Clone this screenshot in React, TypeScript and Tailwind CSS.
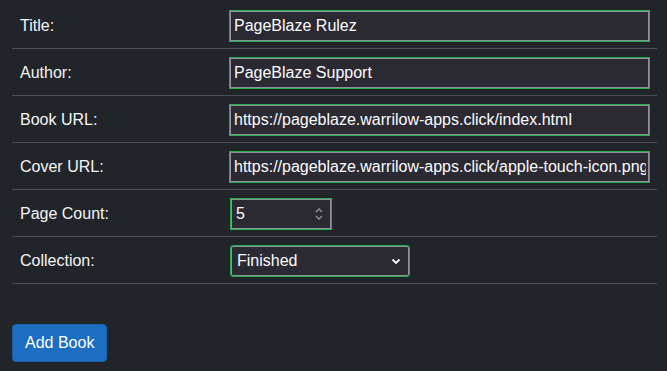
import React from 'react';

const textFields = [
  { label: 'Title:', value: 'PageBlaze Rulez' },
  { label: 'Author:', value: 'PageBlaze Support' },
  { label: 'Book URL:', value: 'https://pageblaze.warrilow-apps.click/index.html' },
  { label: 'Cover URL:', value: 'https://pageblaze.warrilow-apps.click/apple-touch-icon.png' },
];

const control =
  'h-[30px] bg-[#2b2a33] border border-[#8f8f9d] outline outline-1 outline-[#26b050] text-[16px] text-[#fbfbfe]';

function Row({ label, children }: { label: string; children: React.ReactNode }) {
  return (
    <div className="flex items-start h-[47px] pt-[9px] border-b border-[#4b4f54]">
      <div className="w-[211px] h-[30px] px-2 flex items-center text-[16px] text-[#f4f4f4]">{label}</div>
      <div className="px-2 flex items-center">{children}</div>
    </div>
  );
}

export default function App() {
  return (
    <div className="w-[667px] h-[371px] bg-[#212529] font-['Liberation_Sans',Arial,sans-serif] overflow-hidden">
      <div className="ml-3 w-[645px] pt-[2px]">
        {textFields.map((f) => (
          <Row key={f.label} label={f.label}>
            <input
              readOnly
              value={f.value}
              className={`${control} w-[419px] pl-[3px] pr-[2px]`}
            />
          </Row>
        ))}

        <Row label="Page Count:">
          <div className={`${control} w-[100px] flex items-center justify-between pl-[4px] pr-[6px]`}>
            <span>5</span>
            <svg width="10" height="14" viewBox="0 0 10 14" fill="none" stroke="#8f8f9d" strokeWidth="1.4">
              <path d="M2 5 L5 2 L8 5" />
              <path d="M2 9 L5 12 L8 9" />
            </svg>
          </div>
        </Row>

        <Row label="Collection:">
          <div className={`${control} w-[178px] rounded-[2px] flex items-center justify-between pl-[5px] pr-[7px]`}>
            <span>Finished</span>
            <svg width="10" height="7" viewBox="0 0 10 7" fill="none" stroke="#fbfbfe" strokeWidth="1.8">
              <path d="M1.5 1.5 L5 5 L8.5 1.5" />
            </svg>
          </div>
        </Row>

        <button className="mt-[40px] h-[38px] px-3 rounded-[4px] bg-[#1b6ec2] border border-[#1861ac] text-white text-[16px]">
          Add Book
        </button>
      </div>
    </div>
  );
}
